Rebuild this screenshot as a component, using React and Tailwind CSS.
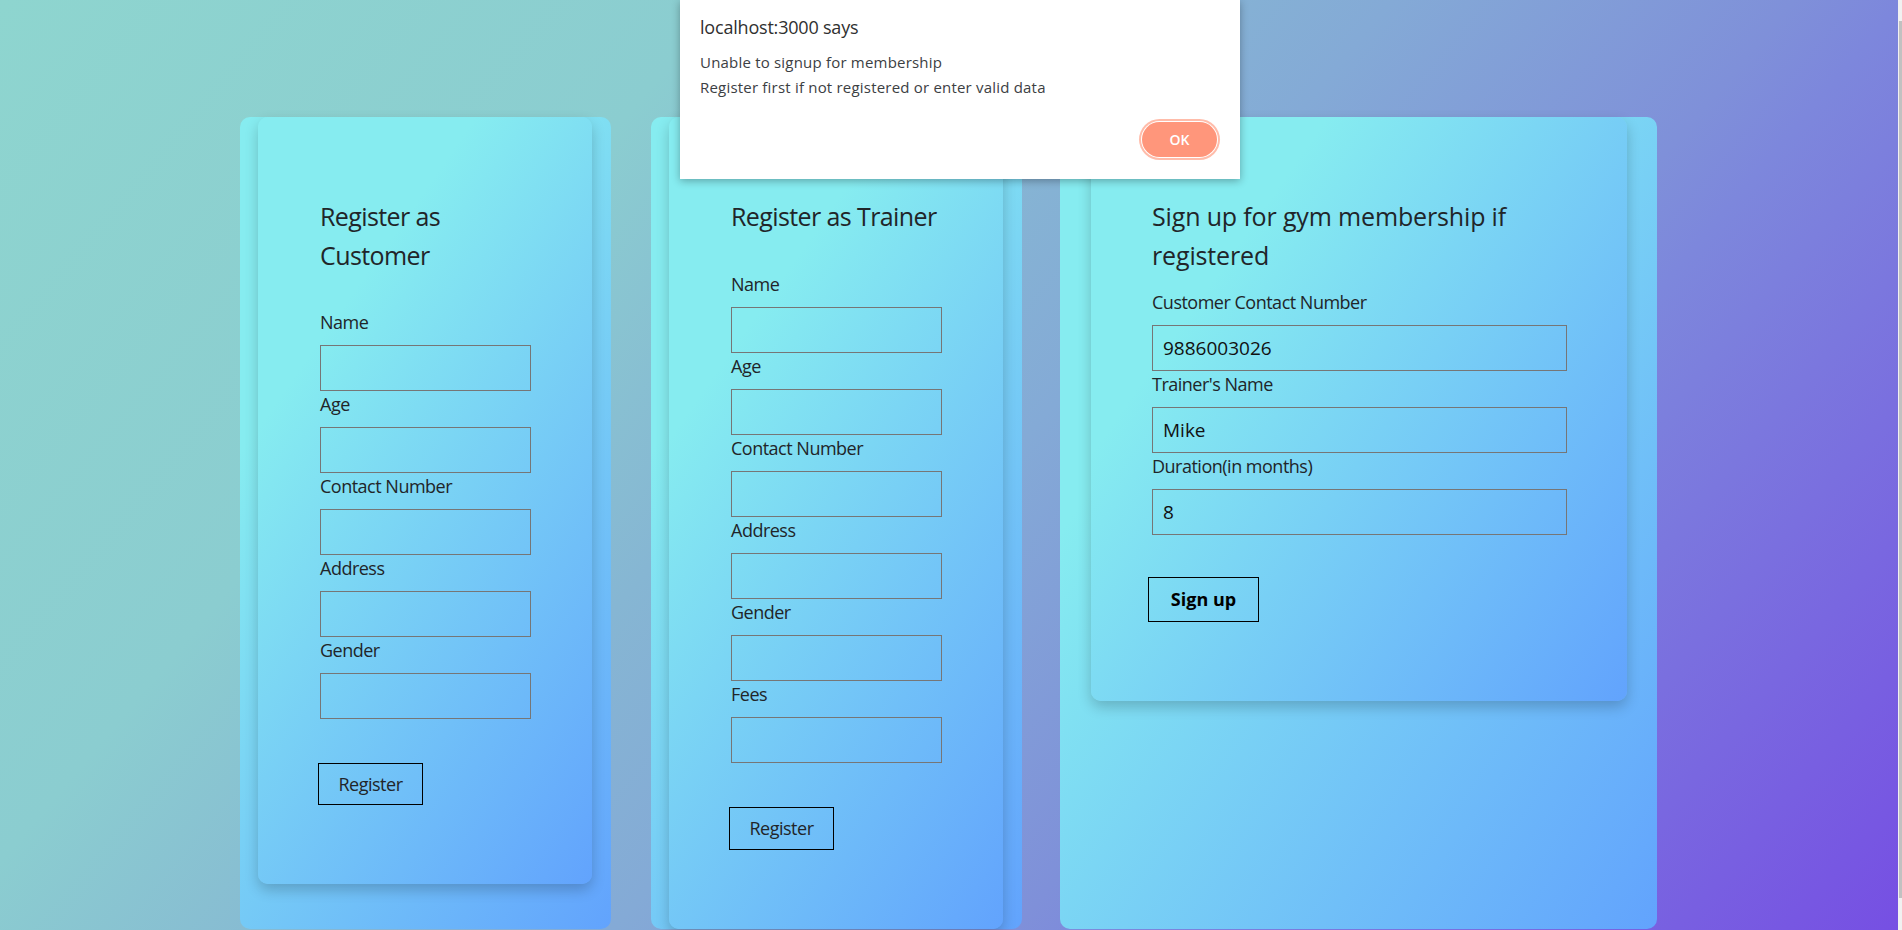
import React from 'react';

const customerFields = ['Name', 'Age', 'Contact Number', 'Address', 'Gender'];
const trainerFields = ['Name', 'Age', 'Contact Number', 'Address', 'Gender', 'Fees'];
const signupFields = [
  { label: 'Customer Contact Number', value: '9886003026' },
  { label: "Trainer's Name", value: 'Mike' },
  { label: 'Duration(in months)', value: '8' },
];

// same gradient on the outer panel and the raised inner card
const cardBg = 'bg-[linear-gradient(125deg,#86ecf0_25%,#62a3fd_100%)]';

function Field({ label, value = '' }) {
  return (
    <div>
      <label className="mb-[9px] block text-[18px] leading-[27px] tracking-[-0.5px]">{label}</label>
      <input
        readOnly
        value={value}
        className="block h-[46px] w-full border border-[#767676] bg-transparent px-[10px] text-[19px] text-[#111] outline-none"
      />
    </div>
  );
}

function Heading({ children, className = '' }) {
  return (
    <h3 className={`whitespace-nowrap text-[25px] font-medium leading-[39px] ${className}`}>
      {children}
    </h3>
  );
}

export default function App() {
  return (
    <div className="relative flex h-[930px] w-full overflow-hidden font-['Open_Sans',sans-serif] text-[#212529]">
      <main className="flex-1 bg-[linear-gradient(130deg,#8ed5cf_0%,#8bcdd0_27%,#86b6d3_42%,#84aad6_52%,#7f90d9_67%,#7d87dc_71%,#764fe3_100%)] pl-[240px] pt-[117px]">
        <div className="flex items-stretch">
          {/* customer */}
          <div className={`w-[371px] rounded-[10px] pl-[18px] ${cardBg}`}>
            <div className={`w-[334px] rounded-[10px] pb-[79px] pl-[62px] pr-[61px] pt-[80px] shadow-[0_6px_14px_rgba(0,0,0,0.2)] ${cardBg}`}>
              <Heading className="mb-[34px] tracking-[-0.6px]">
                Register as
                <br />
                Customer
              </Heading>
              {customerFields.map((f) => (
                <Field key={f} label={f} />
              ))}
              <button className="-ml-[2px] mt-[44px] h-[42px] w-[105px] border border-black text-[18px] tracking-[-0.5px]">
                Register
              </button>
            </div>
          </div>

          {/* trainer */}
          <div className={`ml-[40px] w-[371px] rounded-[10px] pl-[18px] ${cardBg}`}>
            <div className={`w-[334px] rounded-[10px] pb-[79px] pl-[62px] pr-[61px] pt-[80px] shadow-[0_6px_14px_rgba(0,0,0,0.2)] ${cardBg}`}>
              <Heading className="mb-[35px] tracking-[-0.6px]">Register as Trainer</Heading>
              {trainerFields.map((f) => (
                <Field key={f} label={f} />
              ))}
              <button className="-ml-[2px] mt-[44px] h-[43px] w-[105px] border border-black text-[18px] tracking-[-0.5px]">
                Register
              </button>
            </div>
          </div>

          {/* membership */}
          <div className={`ml-[38px] w-[597px] rounded-[10px] pl-[31px] ${cardBg}`}>
            <div className={`w-[536px] rounded-[10px] pb-[79px] pl-[61px] pr-[60px] pt-[80px] shadow-[0_6px_14px_rgba(0,0,0,0.2)] ${cardBg}`}>
              <Heading className="mb-[14px] tracking-[-0.15px]">
                Sign up for gym membership if
                <br />
                registered
              </Heading>
              {signupFields.map((f) => (
                <Field key={f.label} label={f.label} value={f.value} />
              ))}
              <button className="-ml-[4px] mt-[42px] h-[45px] w-[111px] border border-black text-[18px] font-bold text-black">
                Sign up
              </button>
            </div>
          </div>
        </div>
      </main>

      {/* scrollbar strip */}
      <div className="w-[4px] bg-[#f1f1f1] pt-[21px]">
        <div className="ml-auto h-[877px] w-[3px] bg-[#c1c1c1]" />
      </div>

      {/* browser alert */}
      <div className="absolute left-[680px] top-0 flex h-[179px] w-[560px] flex-col bg-white pl-[20px] pr-[23px] pt-[15px] shadow-[0_2px_8px_rgba(0,0,0,0.3)]">
        <div className="text-[18px] leading-[25px] tracking-[-0.2px] text-[#303030]">localhost:3000 says</div>
        <div className="mt-[10px] text-[15px] leading-[25px] tracking-[0.2px] text-[#3c4043]">
          <div>Unable to signup for membership</div>
          <div>Register first if not registered or enter valid data</div>
        </div>
        <div className="mt-[22px] flex justify-end">
          <button className="h-[35px] w-[75px] rounded-full bg-[#ff967b] text-[14px] font-semibold text-white ring-2 ring-[#ffbcaa] ring-offset-1 ring-offset-white">
            OK
          </button>
        </div>
      </div>
    </div>
  );
}
